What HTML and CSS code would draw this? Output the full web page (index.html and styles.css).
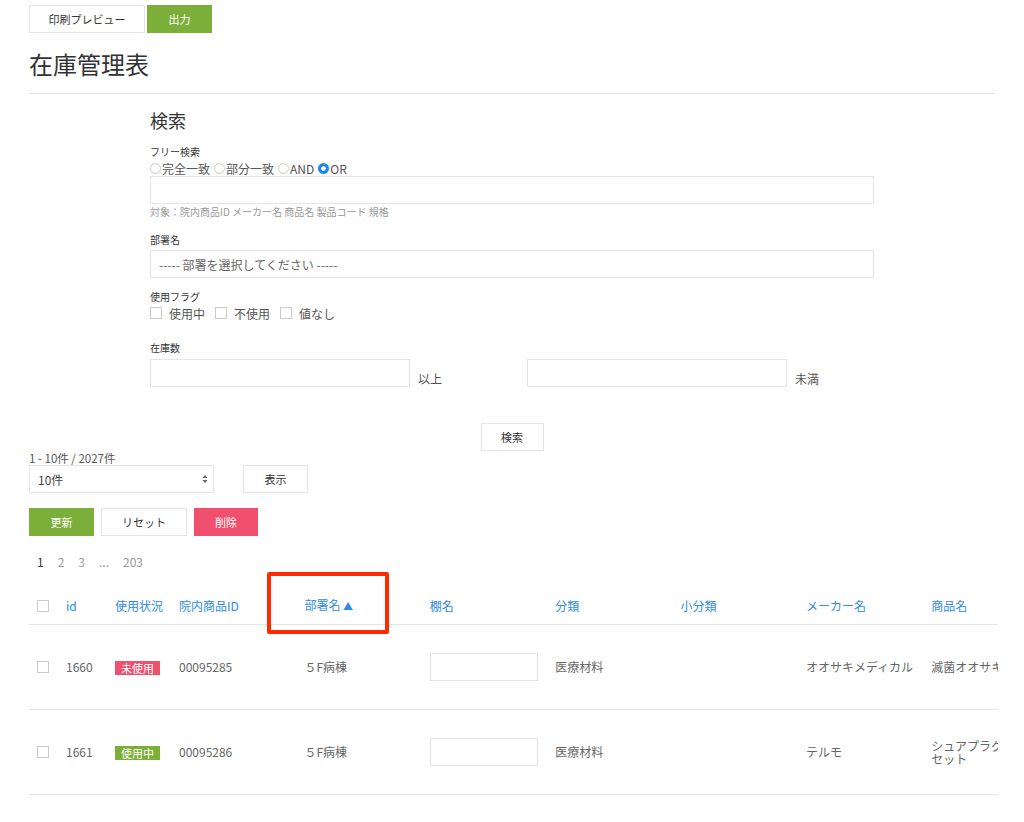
FILE: index.html
```html
<!DOCTYPE html>
<html lang="ja">
<head>
    <meta charset="UTF-8">
    <meta name="viewport" content="width=device-width, initial-scale=1.0">
    <title>在庫管理表</title>
    <link rel="stylesheet" href="styles.css">
</head>
<body>
    <div class="page">
        <div class="toolbar">
            <button class="btn btn-preview">印刷プレビュー</button>
            <button class="btn btn-green btn-out">出力</button>
        </div>

        <h1 class="title">在庫管理表</h1>
        <hr class="divider">

        <!-- 検索フォーム -->
        <form class="search">
            <h2 class="search-title">検索</h2>

            <label class="field-label">フリー検索</label>
            <div class="radios">
                <label class="radio"><input type="radio" name="mode">完全一致</label>
                <label class="radio"><input type="radio" name="mode">部分一致</label>
                <label class="radio"><input type="radio" name="mode">AND</label>
                <label class="radio"><input type="radio" name="mode" checked>OR</label>
            </div>
            <input class="input" type="text">
            <p class="hint">対象：院内商品ID メーカー名 商品名 製品コード 規格</p>

            <label class="field-label field-gap">部署名</label>
            <select class="input select-plain">
                <option>----- 部署を選択してください -----</option>
            </select>

            <label class="field-label field-gap2">使用フラグ</label>
            <div class="checks">
                <label class="check"><input type="checkbox">使用中</label>
                <label class="check"><input type="checkbox">不使用</label>
                <label class="check"><input type="checkbox">値なし</label>
            </div>

            <label class="field-label field-gap3">在庫数</label>
            <div class="range">
                <div class="range-item range-first">
                    <input class="input input-num" type="text">
                    <span class="range-unit">以上</span>
                </div>
                <div class="range-item">
                    <input class="input input-num" type="text">
                    <span class="range-unit">未満</span>
                </div>
            </div>

            <div class="search-actions">
                <button type="button" class="btn">検索</button>
            </div>
        </form>

        <p class="count">1 - 10件 / 2027件</p>
        <div class="per-page">
            <div class="select-wrap">
                <select class="input select-count">
                    <option>10件</option>
                </select>
                <svg class="select-arrow" width="6" height="10" viewBox="0 0 6 10">
                    <path d="M3 1 L5.5 4 H0.5 Z M3 9 L5.5 6 H0.5 Z" fill="#666"/>
                </svg>
            </div>
            <button class="btn">表示</button>
        </div>

        <div class="actions">
            <button class="btn btn-green">更新</button>
            <button class="btn">リセット</button>
            <button class="btn btn-red">削除</button>
        </div>

        <ul class="pager">
            <li class="current">1</li>
            <li>2</li>
            <li>3</li>
            <li>...</li>
            <li>203</li>
        </ul>

        <div class="table-area">
            <div class="table-wrap">
                <table class="stock">
                    <colgroup>
                        <col class="c-chk">
                        <col class="c-id">
                        <col class="c-state">
                        <col class="c-wide">
                        <col class="c-wide">
                        <col class="c-wide">
                        <col class="c-wide">
                        <col class="c-wide">
                        <col class="c-wide">
                        <col class="c-wide">
                        <col class="c-wide">
                    </colgroup>
                    <thead>
                        <tr>
                            <th><input type="checkbox"></th>
                            <th>id</th>
                            <th>使用状況</th>
                            <th>院内商品ID</th>
                            <th>部署名 <span class="sort">▲</span></th>
                            <th>棚名</th>
                            <th>分類</th>
                            <th>小分類</th>
                            <th>メーカー名</th>
                            <th>商品名</th>
                            <th>規格</th>
                        </tr>
                    </thead>
                    <tbody>
                        <tr>
                            <td><input type="checkbox"></td>
                            <td>1660</td>
                            <td><span class="badge badge-red">未使用</span></td>
                            <td>00095285</td>
                            <td>５F病棟</td>
                            <td><input class="input input-shelf" type="text"></td>
                            <td>医療材料</td>
                            <td></td>
                            <td>オオサキメディカル</td>
                            <td>滅菌オオサキガーゼ</td>
                            <td></td>
                        </tr>
                        <tr>
                            <td><input type="checkbox"></td>
                            <td>1661</td>
                            <td><span class="badge badge-green">使用中</span></td>
                            <td>00095286</td>
                            <td>５F病棟</td>
                            <td><input class="input input-shelf" type="text"></td>
                            <td>医療材料</td>
                            <td></td>
                            <td>テルモ</td>
                            <td class="two-line">シュアプラグ延長チューブ<br>セット</td>
                            <td></td>
                        </tr>
                    </tbody>
                </table>
            </div>
            <div class="mark"></div>
        </div>
    </div>
</body>
</html>
```

FILE: styles.css
```css
* {
    margin: 0;
    padding: 0;
    box-sizing: border-box;
    font-family: "Noto Sans CJK JP", "Noto Sans", sans-serif;
}

body {
    background: #fff;
    color: #666;
    font-size: 12px;
}

.page {
    width: 966px;
    margin-left: 29px;
    padding-top: 5px;
}

.btn {
    height: 28px;
    padding: 0 20px;
    background: #fff;
    border: 1px solid #e5e5e5;
    color: #333;
    font-size: 11px;
    line-height: 26px;
    white-space: nowrap;
    cursor: pointer;
}

.btn-green {
    background: #7cae3a;
    border-color: #7cae3a;
    color: #fff;
}

.btn-red {
    background: #f0506e;
    border-color: #f0506e;
    color: #fff;
}

.toolbar {
    display: flex;
    gap: 2px;
}

.btn-preview {
    width: 116px;
    padding: 0;
}

.btn-out {
    width: 65px;
    padding: 0;
}

.title {
    margin-top: 16px;
    font-size: 24px;
    line-height: 29px;
    font-weight: normal;
    color: #333;
}

.divider {
    margin-top: 15px;
    border: none;
    border-top: 1px solid #e5e5e5;
}

/* search form */
.search {
    width: 724px;
    margin: 0 auto;
    display: flex;
    flex-direction: column;
}

.search-title {
    margin-top: 13px;
    font-size: 18px;
    line-height: 27px;
    font-weight: normal;
    color: #333;
}

.field-label {
    margin-top: 10px;
    font-size: 10px;
    line-height: 16px;
    color: #333;
}

.field-gap { margin-top: 13px; }
.field-gap2 { margin-top: 11px; }
.field-gap3 { margin-top: 19px; }

.radios {
    display: flex;
    gap: 4px;
    height: 16px;
    align-items: center;
}

.radio {
    display: flex;
    align-items: center;
    font-size: 12px;
    color: #555;
}

.radio input {
    appearance: none;
    width: 11px;
    height: 11px;
    border: 1px solid #ccc;
    border-radius: 50%;
    margin-right: 1px;
}

.radio input:checked {
    border: none;
    background: radial-gradient(circle, #fff 0 2px, #1e87f0 2.5px);
}

.input {
    height: 28px;
    border: 1px solid #e5e5e5;
    background: #fff;
    padding: 0 8px;
    font-size: 12px;
    color: #666;
    outline: none;
}

.hint {
    margin-top: 1px;
    font-size: 10px;
    line-height: 14px;
    color: #999;
}

.select-plain {
    margin-top: 2px;
    appearance: none;
}

.checks {
    display: flex;
    gap: 10px;
    height: 16px;
    align-items: center;
}

.check {
    display: flex;
    align-items: center;
    gap: 7px;
    font-size: 12px;
    color: #555;
}

input[type="checkbox"] {
    appearance: none;
    width: 12px;
    height: 12px;
    border: 1px solid #ccc;
    background: #fff;
    display: block;
}

.range {
    margin-top: 3px;
    display: flex;
    gap: 22px;
}

.range-item {
    flex: none;
    display: flex;
    align-items: flex-end;
}

.range-first {
    width: 355px;
}

.input-num {
    width: 260px;
}

.range-unit {
    margin-left: 8px;
    font-size: 12px;
    line-height: 16px;
    color: #555;
}

.search-actions {
    margin-top: 36px;
    display: flex;
    justify-content: center;
}

.search-actions .btn {
    width: 63px;
    padding: 0;
}

/* list controls */
.count {
    font-size: 11.5px;
    line-height: 14px;
    color: #555;
}

.per-page {
    display: flex;
    gap: 29px;
}

.select-wrap {
    position: relative;
    width: 185px;
}

.select-count {
    width: 100%;
    appearance: none;
    color: #444;
}

.select-arrow {
    position: absolute;
    right: 6px;
    top: 9px;
}

.per-page .btn {
    width: 65px;
    padding: 0;
}

.actions {
    margin-top: 15px;
    display: flex;
    gap: 7px;
}

.actions .btn:nth-child(1) { width: 65px; padding: 0; }
.actions .btn:nth-child(2) { width: 86px; padding: 0; }
.actions .btn:nth-child(3) { width: 64px; padding: 0; }

.pager {
    list-style: none;
    display: flex;
    gap: 14px;
    margin-top: 18px;
    padding-left: 8px;
    font-size: 12px;
    line-height: 16px;
    color: #999;
}

.pager .current {
    color: #333;
}

/* table */
.table-area {
    position: relative;
    margin-top: 17px;
}

.table-wrap {
    width: 969px;
    overflow: hidden;
}

.stock {
    table-layout: fixed;
    width: 1145px;
    border-collapse: collapse;
}

.c-chk { width: 29px; }
.c-id { width: 49px; }
.c-state { width: 64px; }
.c-wide { width: 125.4px; }

.stock th {
    padding: 10px 8px;
    text-align: left;
    font-weight: normal;
    font-size: 12px;
    line-height: 16px;
    color: #2f8be6;
    border-bottom: 1px solid #e5e5e5;
    white-space: nowrap;
}

.sort {
    font-size: 10px;
}

.stock td {
    padding: 28px 8px;
    height: 85px;
    font-size: 12px;
    line-height: 14px;
    color: #666;
    border-bottom: 1px solid #e5e5e5;
    vertical-align: middle;
    white-space: nowrap;
}

.stock td.two-line {
    line-height: 13px;
}

.input-shelf {
    width: 108px;
    display: block;
}

.badge {
    display: inline-block;
    padding: 0 6px;
    font-size: 11px;
    line-height: 14px;
    color: #fff;
    vertical-align: middle;
}

.badge-red { background: #f0506e; }
.badge-green { background: #7cae3a; }

/* annotation frame */
.mark {
    position: absolute;
    left: 238px;
    top: -15px;
    width: 122px;
    height: 62px;
    border: 4px solid #ff2a00;
    border-radius: 2px;
}
```
